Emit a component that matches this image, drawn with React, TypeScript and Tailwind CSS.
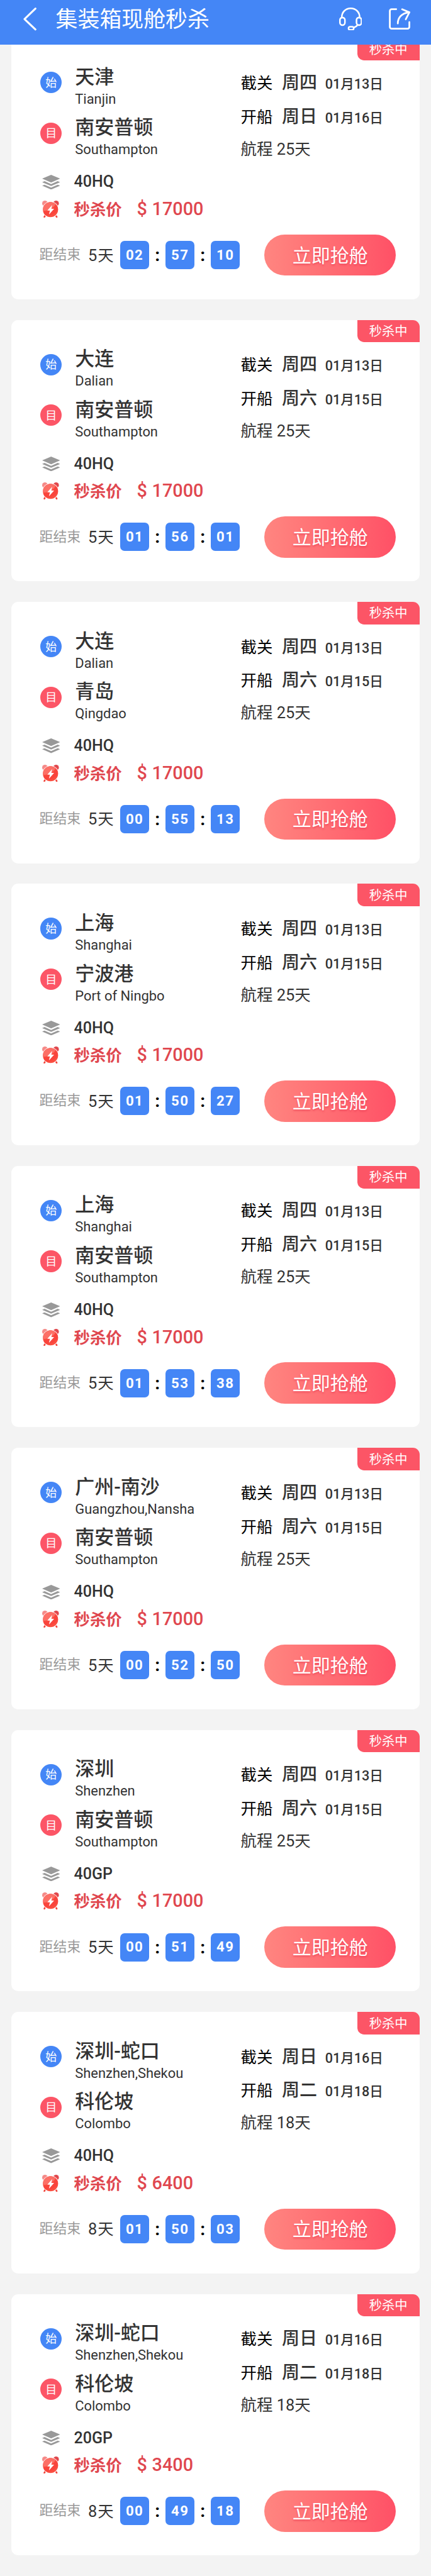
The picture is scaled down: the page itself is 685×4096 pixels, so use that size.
type Port = { zh: string; en: string };

type Deal = {
  from: Port;
  to: Port;
  cutoff: [string, string];
  sail: [string, string];
  voyage: number;
  box: string;
  price: number;
  days: number;
  time: [string, string, string];
};

const southampton: Port = { zh: "南安普顿", en: "Southampton" };
const dalian: Port = { zh: "大连", en: "Dalian" };
const shanghai: Port = { zh: "上海", en: "Shanghai" };
const shekou: Port = { zh: "深圳-蛇口", en: "Shenzhen,Shekou" };
const colombo: Port = { zh: "科伦坡", en: "Colombo" };

const thu: [string, string] = ["周四", "01月13日"];
const sat: [string, string] = ["周六", "01月15日"];
const sun: [string, string] = ["周日", "01月16日"];
const tue: [string, string] = ["周二", "01月18日"];

const deals: Deal[] = [
  { from: { zh: "天津", en: "Tianjin" }, to: southampton, cutoff: thu, sail: sun, voyage: 25, box: "40HQ", price: 17000, days: 5, time: ["02", "57", "10"] },
  { from: dalian, to: southampton, cutoff: thu, sail: sat, voyage: 25, box: "40HQ", price: 17000, days: 5, time: ["01", "56", "01"] },
  { from: dalian, to: { zh: "青岛", en: "Qingdao" }, cutoff: thu, sail: sat, voyage: 25, box: "40HQ", price: 17000, days: 5, time: ["00", "55", "13"] },
  { from: shanghai, to: { zh: "宁波港", en: "Port of Ningbo" }, cutoff: thu, sail: sat, voyage: 25, box: "40HQ", price: 17000, days: 5, time: ["01", "50", "27"] },
  { from: shanghai, to: southampton, cutoff: thu, sail: sat, voyage: 25, box: "40HQ", price: 17000, days: 5, time: ["01", "53", "38"] },
  { from: { zh: "广州-南沙", en: "Guangzhou,Nansha" }, to: southampton, cutoff: thu, sail: sat, voyage: 25, box: "40HQ", price: 17000, days: 5, time: ["00", "52", "50"] },
  { from: { zh: "深圳", en: "Shenzhen" }, to: southampton, cutoff: thu, sail: sat, voyage: 25, box: "40GP", price: 17000, days: 5, time: ["00", "51", "49"] },
  { from: shekou, to: colombo, cutoff: sun, sail: tue, voyage: 18, box: "40HQ", price: 6400, days: 8, time: ["01", "50", "03"] },
  { from: shekou, to: colombo, cutoff: sun, sail: tue, voyage: 18, box: "20GP", price: 3400, days: 8, time: ["00", "49", "18"] },
];

function BackIcon() {
  return (
    <svg viewBox="0 0 34 60" className="h-[38px] w-[21.6px]" fill="none" stroke="#fff" strokeWidth="4.8" strokeLinecap="round" strokeLinejoin="round">
      <path d="M30.500 4 3 30.500l27.500 26" />
    </svg>
  );
}

function HeadsetIcon() {
  return (
    <svg viewBox="0 0 58 58" className="h-[36.8px] w-[36.8px]" fill="none" stroke="#fff" strokeWidth="4" strokeLinecap="round">
      <path d="M6.500 25C6.500 11 16.500 2 29 2s22.500 9 22.500 23" />
      <rect x="2" y="25" width="12.500" height="19" rx="6.200" />
      <rect x="43.500" y="25" width="12.500" height="19" rx="6.200" />
      <rect x="23.500" y="48" width="13" height="8" rx="4" />
      <path d="M37 50c4-1 7-3.500 9.500-6.500" />
    </svg>
  );
}

function ShareIcon() {
  return (
    <svg viewBox="0 0 54 54" className="h-[34.2px] w-[34.2px]" fill="none" stroke="#fff" strokeWidth="4.4" strokeLinecap="round" strokeLinejoin="round">
      <path d="M18.500 2.500H7a4.500 4.500 0 0 0-4.500 4.500v40A4.500 4.500 0 0 0 7 51.500h40a4.500 4.500 0 0 0 4.500-4.500V35" />
      <path d="M33.500 2.800 51.500 10.500 42.500 28" />
      <path d="M22.500 38.500C22.500 24 32 12.500 51 10.500" />
    </svg>
  );
}

function LayersIcon() {
  return (
    <svg viewBox="0 0 45 37" className="h-[23.4px] w-[28.5px]" fill="#999">
      <path d="M22.500 0 45 9.500 22.500 19.500 0 9.500z" />
      <path d="M0 18.500 6 16l16.500 7.300L39 16l6 2.500-22.500 9.700z" />
      <path d="M0 27.300l6-2.500 16.500 7.300L39 24.800l6 2.500L22.500 37z" />
    </svg>
  );
}

function AlarmIcon() {
  return (
    <svg viewBox="0 0 42 43" className="h-[27.3px] w-[26.6px]">
      <circle cx="7" cy="7" r="7" fill="#f58a88" />
      <circle cx="35" cy="7" r="7" fill="#e0474c" />
      <path d="M9 35 5.500 41M33 35l3.500 6" stroke="#f0453c" strokeWidth="4" strokeLinecap="round" />
      <circle cx="21" cy="22.500" r="20.500" fill="#fff" />
      <circle cx="21" cy="22.500" r="19" fill="#fb4e40" />
      <path d="M2 22.500a19 19 0 0 1 32-13.800C25 22 14 26 2 25z" fill="#fc6f66" />
      <path d="M2.500 27C18 29 29 22 34 8.700a19 19 0 0 1 5.800 12C36 32 24 38 8 36.500A19 19 0 0 1 2.500 27z" fill="#f9443c" />
      <path d="M25 11 13 25h6.500l-2.500 10 13-14.500h-7z" fill="#fff" />
    </svg>
  );
}

function PortRow({ port, mark, color }: { port: Port; mark: string; color: string }) {
  return (
    <div className="flex h-[80.55px]">
      <div className={`mt-[9.5px] flex h-[34.2px] w-[34.2px] items-center justify-center rounded-full text-[18px] text-white ${color}`}>
        {mark}
      </div>
      <div className="ml-[21px]">
        <div className="h-9 text-[31px] leading-9 font-medium whitespace-nowrap">{port.zh}</div>
        <div className="text-[21.9px] leading-[33.8px]">{port.en}</div>
      </div>
    </div>
  );
}

function DateRow({ label, date }: { label: string; date: [string, string] }) {
  return (
    <div className="flex h-[53.9px] items-baseline leading-[53.9px] whitespace-nowrap">
      <span className="w-[65.5px] text-[25.4px] text-black">{label}</span>
      <span className="w-[68.6px] text-[28px] font-medium">{date[0]}</span>
      <span className="text-[21.6px] font-medium">{date[1]}</span>
    </div>
  );
}

function Tile({ value }: { value: string }) {
  return (
    <span className="flex h-[45px] w-[45.7px] items-center justify-center rounded-[7px] bg-[#4486f6] text-[22.2px] font-bold tracking-[1.5px] text-white">
      {value}
    </span>
  );
}

function Colon() {
  return <span className="w-[26.4px] text-center text-[28px] leading-[45px] font-bold text-black">:</span>;
}

function Ribbon({ label }: { label?: string }) {
  return (
    <div className="absolute top-0 right-0 flex h-[35.8px] w-[99px] items-center justify-center rounded-bl-[10.8px] bg-[#fc5566] pt-[1.5px] text-[20.3px] text-white">
      {label}
    </div>
  );
}

function DealCard({ deal }: { deal: Deal }) {
  return (
    <section className="relative h-[415.44px] shrink-0 overflow-hidden rounded-[10.8px] bg-white pt-[44.5px] pl-[45.7px]">
      <Ribbon label="秒杀中" />

      <div className="flex h-[161.1px]">
        <div className="w-[318.5px]">
          <PortRow port={deal.from} mark="始" color="bg-[#4486f6]" />
          <PortRow port={deal.to} mark="目" color="bg-[#fc5566]" />
        </div>
        <div>
          <DateRow label="截关" date={deal.cutoff} />
          <DateRow label="开船" date={deal.sail} />
          <div className="text-[25.4px] leading-[48px]">航程 {deal.voyage}天</div>
        </div>
      </div>

      <div className="mt-[4.5px] flex h-[38px] items-center">
        <span className="ml-[2.5px] w-[51px]"><LayersIcon /></span>
        <span className="text-[25px] leading-[38px] font-medium">{deal.box}</span>
      </div>
      <div className="mt-[1.2px] flex h-[46px] items-center">
        <span className="ml-[3px] w-[50.5px]"><AlarmIcon /></span>
        <div className="flex items-baseline leading-[46px] text-[#e0474f]">
          <span className="w-[100px] text-[25.4px] font-bold">秒杀价</span>
          <span className="w-[24px] text-[28.8px] font-medium">$</span>
          <span className="text-[28.8px] font-medium">{deal.price}</span>
        </div>
      </div>

      <div className="mt-[17.2px] flex h-[65.7px] items-center">
        <span className="-ml-[1.5px] w-[77.5px] text-[21.9px] text-[#999]">距结束</span>
        <span className="w-[51.2px] text-[25.4px] tracking-[1px] whitespace-nowrap">{deal.days}天</span>
        <Tile value={deal.time[0]} />
        <Colon />
        <Tile value={deal.time[1]} />
        <Colon />
        <Tile value={deal.time[2]} />
        <button className="ml-[38.9px] h-[65.7px] w-[209.3px] rounded-full bg-linear-to-r from-[#ff8580] to-[#ff5066] pt-px text-[30px] text-white text-shadow-[0_2px_3px_rgba(225,40,70,0.5)]">
          立即抢舱
        </button>
      </div>
    </section>
  );
}

export default function App() {
  return (
    <main className="flex h-[4096px] w-[685px] flex-col overflow-hidden bg-[#f3f3f3] font-['Roboto','Noto_Sans_CJK_SC',sans-serif] text-[#333]">
      <header className="relative z-10 flex h-[71px] shrink-0 items-center bg-[#4486f6] pr-[33px] pb-[11px] pl-[37px] text-white">
        <BackIcon />
        <h1 className="ml-[30px] pt-[3px] text-[34.9px] leading-[60px]">集装箱现舱秒杀</h1>
        <div className="ml-auto flex items-center gap-[42.5px]">
          <HeadsetIcon />
          <ShareIcon />
        </div>
      </header>

      <div className="mx-[18.4px] -mt-[10.75px] flex flex-col gap-[32.98px]">
        {deals.map((deal, i) => (
          <DealCard key={i} deal={deal} />
        ))}
        {/* top edge of the next card in the list */}
        <section className="relative h-10 shrink-0 overflow-hidden rounded-t-[10.8px] bg-white">
          <Ribbon />
        </section>
      </div>
    </main>
  );
}
